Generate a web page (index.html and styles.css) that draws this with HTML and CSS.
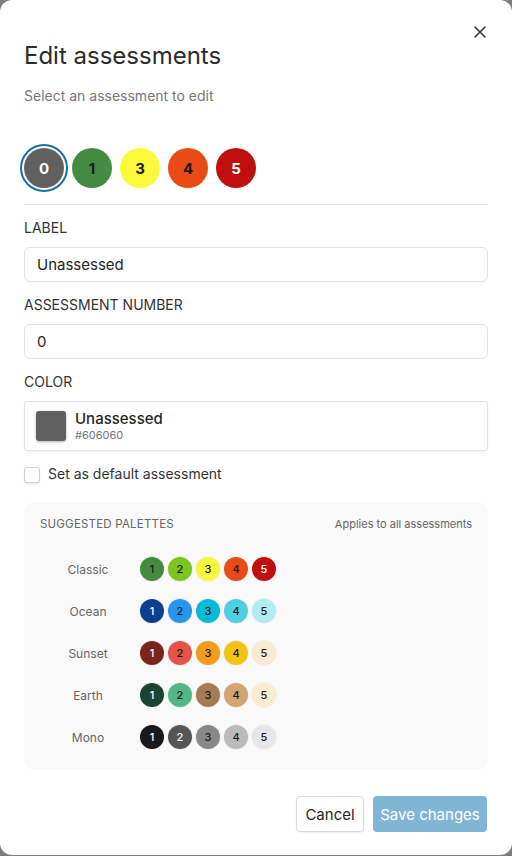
FILE: index.html
```html
<!DOCTYPE html>
<html lang="en">
<head>
  <meta charset="UTF-8">
  <title>Edit assessments</title>
  <link rel="stylesheet" href="styles.css">
</head>
<body>

  <div class="modal">

    <!-- header -->
    <div class="modal-head">
      <h2>Edit assessments</h2>
      <button class="close" type="button" aria-label="Close">
        <svg width="12" height="12" viewBox="0 0 12 12"><path d="M1 1L11 11M11 1L1 11" stroke="#333" stroke-width="1.6" stroke-linecap="round"/></svg>
      </button>
    </div>
    <p class="sub">Select an assessment to edit</p>

    <!-- assessment picker -->
    <div class="picker">
      <span class="dot selected light-text" style="background:#606060">0</span>
      <span class="dot" style="background:#448b42">1</span>
      <span class="dot" style="background:#fafa3a">3</span>
      <span class="dot" style="background:#e84b15">4</span>
      <span class="dot light-text" style="background:#c00f0f">5</span>
    </div>

    <hr class="divider">

    <div class="field">
      <label>LABEL</label>
      <input type="text" value="Unassessed">
    </div>

    <div class="field">
      <label>ASSESSMENT NUMBER</label>
      <input type="text" value="0">
    </div>

    <div class="field">
      <label>COLOR</label>
      <div class="color-box">
        <span class="swatch" style="background:#606060"></span>
        <div class="color-info">
          <div class="color-name">Unassessed</div>
          <div class="color-hex">#606060</div>
        </div>
      </div>
    </div>

    <label class="check">
      <input type="checkbox">
      <span>Set as default assessment</span>
    </label>

    <!-- palettes -->
    <div class="palettes">
      <div class="palettes-head">
        <span class="palettes-title">SUGGESTED PALETTES</span>
        <span class="palettes-note">Applies to all assessments</span>
      </div>

      <div class="palette">
        <span class="palette-name">Classic</span>
        <span class="chip" style="background:#448b42">1</span>
        <span class="chip" style="background:#7cc420">2</span>
        <span class="chip" style="background:#f8f83a">3</span>
        <span class="chip" style="background:#e84a18">4</span>
        <span class="chip light-text" style="background:#c00f0f">5</span>
      </div>
      <div class="palette">
        <span class="palette-name">Ocean</span>
        <span class="chip light-text" style="background:#0d3f8f">1</span>
        <span class="chip" style="background:#2496f0">2</span>
        <span class="chip" style="background:#06bcd2">3</span>
        <span class="chip" style="background:#4fd0e2">4</span>
        <span class="chip" style="background:#b3ebf2">5</span>
      </div>
      <div class="palette">
        <span class="palette-name">Sunset</span>
        <span class="chip light-text" style="background:#7b2419">1</span>
        <span class="chip" style="background:#e5524a">2</span>
        <span class="chip" style="background:#f39b1d">3</span>
        <span class="chip" style="background:#f1c414">4</span>
        <span class="chip" style="background:#fbe9d0">5</span>
      </div>
      <div class="palette">
        <span class="palette-name">Earth</span>
        <span class="chip light-text" style="background:#1b4432">1</span>
        <span class="chip" style="background:#52b689">2</span>
        <span class="chip" style="background:#a57c55">3</span>
        <span class="chip" style="background:#d4a473">4</span>
        <span class="chip" style="background:#faedcd">5</span>
      </div>
      <div class="palette">
        <span class="palette-name">Mono</span>
        <span class="chip light-text" style="background:#1a1a1a">1</span>
        <span class="chip light-text" style="background:#555555">2</span>
        <span class="chip" style="background:#888888">3</span>
        <span class="chip" style="background:#bbbbbb">4</span>
        <span class="chip" style="background:#e6e6e6">5</span>
      </div>
    </div>

    <!-- actions -->
    <div class="actions">
      <button type="button" class="btn cancel">Cancel</button>
      <button type="button" class="btn save">Save changes</button>
    </div>

  </div>

</body>
</html>
```

FILE: styles.css
```css
body {
  margin: 0;
  background: #7d7d7d;
  font-family: Inter, "Noto Sans", sans-serif;
  color: #222;
}

.modal {
  box-sizing: border-box;
  width: 512px;
  height: 855px;
  background: white;
  border-radius: 12px;
  padding: 20px 24px 24px;
}

.modal-head {
  display: flex;
  justify-content: space-between;
  align-items: flex-start;
}

.modal-head h2 {
  margin: 22px 0 0;
  font-size: 24px;
  line-height: 28px;
  font-weight: 400;
  color: #2b2b2b;
}

.close {
  width: 24px;
  height: 24px;
  margin-right: -4px;
  padding: 0;
  border: none;
  background: none;
  display: flex;
  align-items: center;
  justify-content: center;
}

.sub {
  margin: 16px 0 0;
  font-size: 14px;
  line-height: 20px;
  color: #777;
}

.picker {
  display: flex;
  gap: 8px;
  margin-top: 42px;
}

.dot {
  width: 40px;
  height: 40px;
  border-radius: 50%;
  display: flex;
  align-items: center;
  justify-content: center;
  font-size: 15px;
  font-weight: 700;
  color: #1a1a1a;
}

.dot.selected {
  box-shadow: 0 0 0 2px white, 0 0 0 4px #1670a8;
}

.light-text {
  color: white !important;
}

.divider {
  border: none;
  border-top: 1px solid #e6e6e6;
  margin: 16px 0 13px;
}

.field {
  margin-bottom: 13px;
}

.field label {
  display: block;
  font-size: 14px;
  line-height: 20px;
  color: #333;
  margin-bottom: 9px;
}

.field input {
  box-sizing: border-box;
  width: 100%;
  height: 35px;
  border: 1px solid #e4e4e4;
  border-radius: 6px;
  padding: 0 12px;
  font-family: inherit;
  font-size: 15px;
  color: #262626;
}

.color-box {
  box-sizing: border-box;
  height: 50px;
  border: 1px solid #e4e4e4;
  border-radius: 3px;
  display: flex;
  align-items: center;
  gap: 9px;
  padding: 0 11px;
  box-shadow: 0 1px 2px rgba(0, 0, 0, 0.05);
}

.swatch {
  width: 30px;
  height: 30px;
  border-radius: 3px;
  box-shadow: 0 1px 3px rgba(0, 0, 0, 0.3);
}

.color-name {
  font-size: 15px;
  line-height: 18px;
  font-weight: 500;
  color: #262626;
}

.color-hex {
  font-size: 11px;
  line-height: 14px;
  color: #777;
}

.check {
  display: flex;
  align-items: center;
  gap: 8px;
  margin-top: 12px;
  font-size: 14px;
  color: #333;
}

.check input {
  appearance: none;
  width: 16px;
  height: 16px;
  margin: 3px 0 0;
  border: 1px solid #d0d0d0;
  border-radius: 3px;
  background: white;
  box-shadow: 0 1px 2px rgba(0, 0, 0, 0.08);
}

.palettes {
  margin-top: 19px;
  background: #f9f9f9;
  border-radius: 10px;
  padding: 14px 16px 12px;
}

.palettes-head {
  display: flex;
  justify-content: space-between;
  align-items: center;
  font-size: 11px;
  line-height: 16px;
  color: #666;
  margin-bottom: 16px;
}

.palettes-title {
  font-size: 11.5px;
  letter-spacing: 0.2px;
}

.palette {
  display: flex;
  align-items: center;
  gap: 4px;
  height: 42px;
}

.palette-name {
  width: 96px;
  text-align: center;
  font-size: 12px;
  color: #666;
}

.chip {
  width: 24px;
  height: 24px;
  border-radius: 50%;
  display: flex;
  align-items: center;
  justify-content: center;
  font-size: 11px;
  font-weight: 500;
  color: #1a1a1a;
  box-shadow: 0 0 0 1px rgba(0, 0, 0, 0.04);
}

.actions {
  display: flex;
  justify-content: flex-end;
  gap: 9px;
  margin-top: 26px;
  margin-right: 1px;
}

.btn {
  height: 36px;
  padding: 0;
  border-radius: 4px;
  font-family: inherit;
  font-size: 15px;
  white-space: nowrap;
}

.cancel {
  width: 68px;
  background: white;
  border: 1px solid #dcdcdc;
  color: #262626;
  box-shadow: 0 1px 2px rgba(0, 0, 0, 0.06);
}

.save {
  width: 114px;
  background: #7fb6d6;
  border: none;
  color: white;
}
```
